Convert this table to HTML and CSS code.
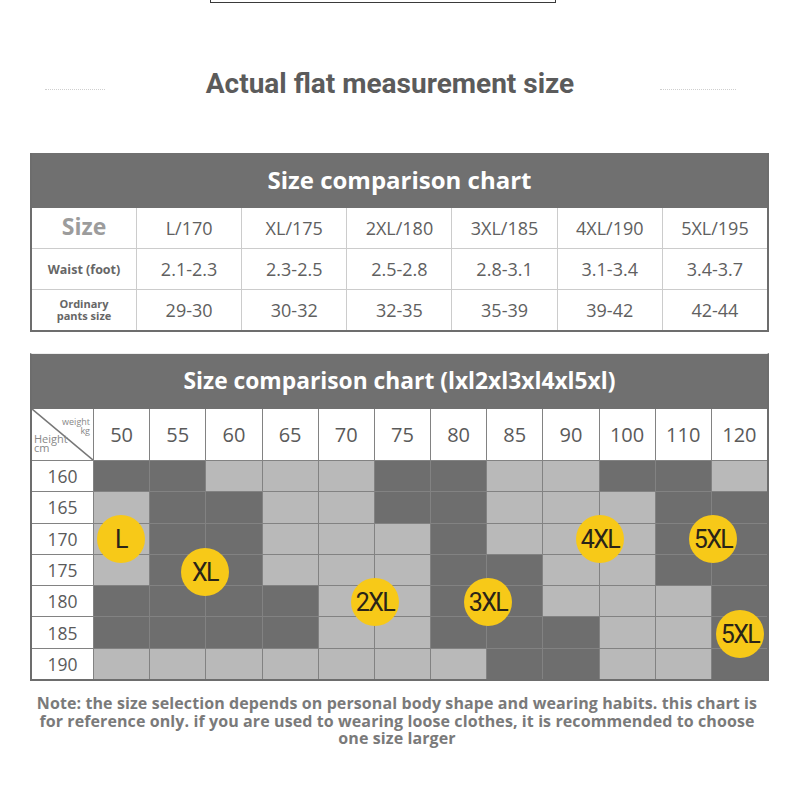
FILE: index.html
```html
<!DOCTYPE html>
<html lang="en">
<head>
<meta charset="utf-8">
<title>Size chart</title>
<link rel="stylesheet" href="styles.css">
</head>
<body>
<div class="page">
  <div class="top-frame"></div>

  <div class="title-row">
    <span class="dots"></span>
    <h1 class="page-title">Actual flat measurement size</h1>
    <span class="dots dots-right"></span>
  </div>

  <section class="chart chart-one">
    <div class="chart-title">Size comparison chart</div>
    <div class="size-grid">
      <div class="cell head-size">Size</div>
      <div class="cell">L/170</div>
      <div class="cell">XL/175</div>
      <div class="cell">2XL/180</div>
      <div class="cell">3XL/185</div>
      <div class="cell">4XL/190</div>
      <div class="cell">5XL/195</div>

      <div class="cell label">Waist (foot)</div>
      <div class="cell">2.1-2.3</div>
      <div class="cell">2.3-2.5</div>
      <div class="cell">2.5-2.8</div>
      <div class="cell">2.8-3.1</div>
      <div class="cell">3.1-3.4</div>
      <div class="cell">3.4-3.7</div>

      <div class="cell label label-small">Ordinary<br>pants size</div>
      <div class="cell">29-30</div>
      <div class="cell">30-32</div>
      <div class="cell">32-35</div>
      <div class="cell">35-39</div>
      <div class="cell">39-42</div>
      <div class="cell">42-44</div>
    </div>
  </section>

  <section class="chart chart-two">
    <div class="chart-title chart-title-two">Size comparison chart (lxl2xl3xl4xl5xl)</div>
    <div class="wh-wrap">
      <div class="wh-grid">
        <div class="corner">
          <svg class="corner-line" viewBox="0 0 100 100" preserveAspectRatio="none"><line x1="0" y1="0" x2="100" y2="100" stroke="#777" stroke-width="1.6" vector-effect="non-scaling-stroke"/></svg>
          <span class="corner-w">weight<br>kg</span>
          <span class="corner-h">Height<br>cm</span>
        </div>
        <div class="hcell">50</div><div class="hcell">55</div><div class="hcell">60</div><div class="hcell">65</div>
        <div class="hcell">70</div><div class="hcell">75</div><div class="hcell">80</div><div class="hcell">85</div>
        <div class="hcell">90</div><div class="hcell">100</div><div class="hcell">110</div><div class="hcell">120</div>

        <div class="rcell">160</div>
        <div class="d"></div><div class="d"></div><div class="l"></div><div class="l"></div><div class="l"></div><div class="d"></div>
        <div class="d"></div><div class="l"></div><div class="l"></div><div class="d"></div><div class="d"></div><div class="l"></div>

        <div class="rcell">165</div>
        <div class="l"></div><div class="d"></div><div class="d"></div><div class="l"></div><div class="l"></div><div class="d"></div>
        <div class="d"></div><div class="l"></div><div class="l"></div><div class="l"></div><div class="d"></div><div class="d"></div>

        <div class="rcell">170</div>
        <div class="l"></div><div class="d"></div><div class="d"></div><div class="l"></div><div class="l"></div><div class="l"></div>
        <div class="d"></div><div class="l"></div><div class="l"></div><div class="l"></div><div class="d"></div><div class="d"></div>

        <div class="rcell">175</div>
        <div class="l"></div><div class="d"></div><div class="d"></div><div class="l"></div><div class="l"></div><div class="l"></div>
        <div class="d"></div><div class="d"></div><div class="l"></div><div class="l"></div><div class="d"></div><div class="d"></div>

        <div class="rcell">180</div>
        <div class="d"></div><div class="d"></div><div class="d"></div><div class="d"></div><div class="l"></div><div class="l"></div>
        <div class="d"></div><div class="d"></div><div class="l"></div><div class="l"></div><div class="l"></div><div class="d"></div>

        <div class="rcell">185</div>
        <div class="d"></div><div class="d"></div><div class="d"></div><div class="d"></div><div class="l"></div><div class="l"></div>
        <div class="d"></div><div class="d"></div><div class="d"></div><div class="l"></div><div class="l"></div><div class="d"></div>

        <div class="rcell">190</div>
        <div class="l"></div><div class="l"></div><div class="l"></div><div class="l"></div><div class="l"></div><div class="l"></div>
        <div class="l"></div><div class="d"></div><div class="d"></div><div class="l"></div><div class="l"></div><div class="d"></div>
      </div>

      <span class="badge b-l">L</span>
      <span class="badge b-xl">XL</span>
      <span class="badge b-2xl">2XL</span>
      <span class="badge b-3xl">3XL</span>
      <span class="badge b-4xl">4XL</span>
      <span class="badge b-5xl">5XL</span>
      <span class="badge b-5xl-b">5XL</span>
    </div>
  </section>

  <p class="note">Note: the size selection depends on personal body shape and wearing habits. this chart is<br>for reference only. if you are used to wearing loose clothes, it is recommended to choose<br>one size larger</p>
</div>
</body>
</html>
```

FILE: styles.css
```css
* { box-sizing: border-box; }

html, body {
  margin: 0;
  padding: 0;
  background: #ffffff;
}

.page {
  width: 800px;
  height: 800px;
  overflow: hidden;
  font-family: "Open Sans", "Noto Sans", sans-serif;
}

.top-frame {
  width: 346px;
  height: 3px;
  margin-left: 210px;
  border: 1.5px solid #3a3a3a;
  border-top: none;
}

.title-row {
  height: 150px;
  display: grid;
  grid-template-columns: 1fr auto 1fr;
  align-items: center;
  padding-top: 10px;
}

.dots {
  justify-self: start;
  margin-left: 45px;
  width: 60px;
  border-top: 1px dotted #cfcfcf;
  margin-top: 12px;
}

.dots-right {
  justify-self: end;
  margin-left: 0;
  margin-right: 64px;
  width: 76px;
}

.page-title {
  margin: 0 20px 0 0;
  font-family: "Roboto", "Liberation Sans", sans-serif;
  font-weight: 700;
  font-size: 28px;
  letter-spacing: 0;
  color: #5b5b5b;
}

.chart {
  width: 739px;
  margin-left: 30px;
  border: 2px solid #6d6d6d;
  border-top: none;
}

.chart-title {
  background: #707070;
  color: #ffffff;
  font-weight: 700;
  font-size: 24px;
  text-align: center;
  height: 55px;
  line-height: 53px;
}

.chart-title-two {
  font-size: 22.8px;
}

/* Table one */
.size-grid {
  display: grid;
  grid-template-columns: 104px repeat(6, 1fr);
  grid-auto-rows: 40px;
  gap: 1px;
  background: #cccccc;
}

.cell {
  background: #ffffff;
  display: flex;
  align-items: center;
  justify-content: center;
  font-size: 18px;
  color: #606060;
  font-weight: 400;
}

.head-size {
  font-size: 23px;
  font-weight: 700;
  color: #9c9c9c;
  padding-bottom: 4px;
}

.label {
  font-size: 12.5px;
  font-weight: 700;
  color: #666666;
}

.label-small {
  font-size: 11px;
  line-height: 12px;
  text-align: center;
}

/* Table two */
.chart-two {
  margin-top: 21px;
  border-top: 1px solid #eeeeee;
}

.wh-wrap {
  position: relative;
}

.wh-grid {
  display: grid;
  grid-template-columns: 61px repeat(12, 1fr);
  grid-template-rows: 51px repeat(7, 30.3px);
  gap: 1px;
  background: #828282;
}

.corner {
  position: relative;
  background: #ffffff;
}

.corner-line {
  position: absolute;
  inset: 0;
  width: 100%;
  height: 100%;
}

.corner-w {
  position: absolute;
  right: 3px;
  top: 8px;
  font-size: 9px;
  line-height: 9px;
  text-align: right;
  color: #888888;
}

.corner-h {
  position: absolute;
  left: 2px;
  top: 25px;
  font-size: 11px;
  line-height: 9px;
  color: #888888;
}

.hcell {
  background: #ffffff;
  display: flex;
  align-items: center;
  justify-content: center;
  font-size: 20px;
  color: #5a5a5a;
}

.rcell {
  background: #ffffff;
  display: flex;
  align-items: center;
  justify-content: center;
  font-size: 17.5px;
  color: #5a5a5a;
}

.d { background: #6e6e6e; }
.l { background: #b9b9b9; }

.badge {
  position: absolute;
  width: 48px;
  height: 48px;
  margin: -24px 0 0 -24px;
  border-radius: 50%;
  background: #f7c918;
  color: #2a2418;
  display: flex;
  align-items: center;
  justify-content: center;
  font-family: "Roboto", "Liberation Sans", sans-serif;
  font-size: 25px;
  letter-spacing: -1.5px;
}

.b-l    { left: 89px;  top: 130px; }
.b-xl   { left: 173px; top: 163px; }
.b-2xl  { left: 343px; top: 193px; }
.b-3xl  { left: 456px; top: 193px; }
.b-4xl  { left: 568px; top: 130px; }
.b-5xl  { left: 681px; top: 130px; }
.b-5xl-b { left: 708px; top: 225px; }

.note {
  margin: 14px 6px 0 0;
  padding: 0;
  text-align: center;
  white-space: nowrap;
  font-family: "Open Sans", "Noto Sans", sans-serif;
  font-weight: 700;
  font-size: 16px;
  line-height: 17.5px;
  letter-spacing: 0.1px;
  color: #7a7a7a;
}
```
